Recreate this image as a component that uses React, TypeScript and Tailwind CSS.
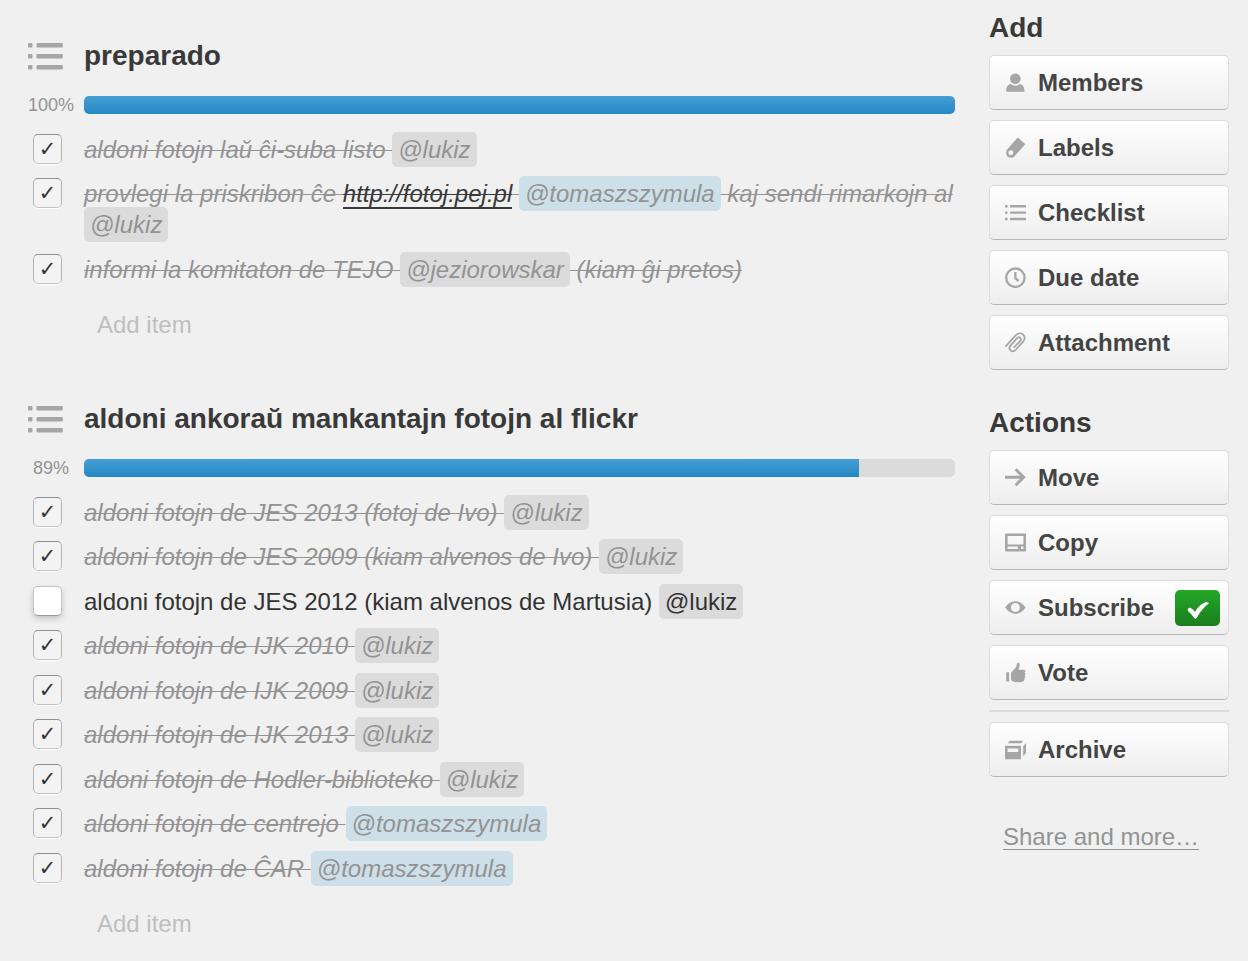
import React, { Fragment, useState } from "react";

type Part =
  | string
  | { mention: string; self?: boolean }
  | { href: string; text: string };

type Item = { id: string; done: boolean; parts: Part[] };

type List = { title: string; percent: number; items: Item[] };

const lukiz: Part = { mention: "@lukiz" };
const tomasz: Part = { mention: "@tomaszszymula", self: true };

const lists: List[] = [
  {
    title: "preparado",
    percent: 100,
    items: [
      { id: "p1", done: true, parts: ["aldoni fotojn laŭ ĉi-suba listo ", lukiz] },
      {
        id: "p2",
        done: true,
        parts: [
          "provlegi la priskribon ĉe ",
          { href: "http://fotoj.pej.pl", text: "http://fotoj.pej.pl" },
          " ",
          tomasz,
          " kaj sendi rimarkojn al ",
          lukiz,
        ],
      },
      {
        id: "p3",
        done: true,
        parts: ["informi la komitaton de TEJO ", { mention: "@jeziorowskar" }, " (kiam ĝi pretos)"],
      },
    ],
  },
  {
    title: "aldoni ankoraŭ mankantajn fotojn al flickr",
    percent: 89,
    items: [
      { id: "f1", done: true, parts: ["aldoni fotojn de JES 2013 (fotoj de Ivo) ", lukiz] },
      { id: "f2", done: true, parts: ["aldoni fotojn de JES 2009 (kiam alvenos de Ivo) ", lukiz] },
      { id: "f3", done: false, parts: ["aldoni fotojn de JES 2012 (kiam alvenos de Martusia) ", lukiz] },
      { id: "f4", done: true, parts: ["aldoni fotojn de IJK 2010 ", lukiz] },
      { id: "f5", done: true, parts: ["aldoni fotojn de IJK 2009 ", lukiz] },
      { id: "f6", done: true, parts: ["aldoni fotojn de IJK 2013 ", lukiz] },
      { id: "f7", done: true, parts: ["aldoni fotojn de Hodler-biblioteko ", lukiz] },
      { id: "f8", done: true, parts: ["aldoni fotojn de centrejo ", tomasz] },
      { id: "f9", done: true, parts: ["aldoni fotojn de ĈAR ", tomasz] },
    ],
  },
];

function Icon({ children }: { children: React.ReactNode }) {
  return (
    <svg
      viewBox="0 0 21 21"
      className="size-[21px] shrink-0 text-[#a6a6a6]"
      fill="currentColor"
      aria-hidden="true"
    >
      {children}
    </svg>
  );
}

const MembersIcon = () => (
  <Icon>
    <circle cx="10.3" cy="6.7" r="5.3" />
    <path d="M1.2 19.8v-1.6c0-3 2-5.6 4.6-6.1 1.2 1.1 2.8 1.7 4.5 1.7s3.3-.6 4.500-1.7c2.600.5 4.600 3.100 4.600 6.100v1.600z" />
  </Icon>
);

const LabelsIcon = () => (
  <Icon>
    <path
      fillRule="evenodd"
      d="M12.8.6 20.4 7.2 9.300 19.400c-1.300 1.300-4.300 1.700-6.200.6C1.100 18.800.5 15.300 1.900 12.800zM5.800 13.200a2.500 2.500 0 1 0 .01 5 2.500 2.500 0 0 0-.01-5z"
    />
  </Icon>
);

const ChecklistIcon = () => (
  <Icon>
    {[3, 9.4, 15.8].map((y) => (
      <Fragment key={y}>
        <rect x="0" y={y} width="2.6" height="2.4" rx=".5" />
        <rect x="5" y={y} width="16" height="2.4" rx=".5" />
      </Fragment>
    ))}
  </Icon>
);

const ClockIcon = () => (
  <Icon>
    <g fill="none" stroke="currentColor" strokeWidth="2.3">
      <circle cx="10.4" cy="10.7" r="9.2" />
      <path d="M10.4 5v6.300l3.300 2.700" />
    </g>
  </Icon>
);

const AttachmentIcon = () => (
  <Icon>
    <path
      d="M.9 14.2 10.9 3.100C13 .8 16 .8 18 2.500s2.200 4.600.3 6.800L10.600 18c-1.300 1.500-3.600 1.700-5 .4-1.500-1.300-1.400-3.300-.1-4.800l6.600-7.400c.9-1 2.300-1 3.100-.3.900.8.9 2 .1 2.900L9.200 15.200"
      fill="none"
      stroke="currentColor"
      strokeWidth="1.8"
      strokeLinecap="round"
    />
  </Icon>
);

const MoveIcon = () => (
  <Icon>
    <path d="M0 10.300h18M10.600 2.300l8 8-8 8" fill="none" stroke="currentColor" strokeWidth="3" />
  </Icon>
);

const CopyIcon = () => (
  <Icon>
    <path
      fillRule="evenodd"
      d="M1 1.500h19a1 1 0 0 1 1 1v16a1 1 0 0 1-1 1H1a1 1 0 0 1-1-1v-16a1 1 0 0 1 1-1zM2.600 4v8.400h15.800V4zM2.600 14.500v2.600h10.200v-2.600zM16 14.500v2.600h2.400v-2.600z"
    />
  </Icon>
);

const EyeIcon = () => (
  <Icon>
    <path
      fillRule="evenodd"
      d="M.2 10.500C2.900 6.500 6.400 4.300 10.400 4.300s7.500 2.200 10.200 6.200c-2.700 4-6.200 6.200-10.200 6.200S2.900 14.500.2 10.500zM10.400 6a4.500 4.500 0 1 0 .01 9 4.500 4.500 0 0 0-.01-9z"
    />
  </Icon>
);

const VoteIcon = () => (
  <Icon>
    <path d="M1.200 10.200h2.900v9.400H1.200zM6 12.200c0-1.200.4-2 1.300-2.900l3.500-3.800c.9-1.200.9-2.400 1.200-4.200.3-.9 2.200-.7 2.500.5.4 1.600 0 3.800-1 5.900h5.200c1.900 0 2.300 2.400.8 3 1.200.6 1.200 2.400.1 3 .9.800.8 2.400-.4 2.900.6 1 .1 2.300-1.100 2.600-1.600 1.300-5.500 1.200-7.800.8-2.200-.3-4.300-1.200-4.300-3z" />
  </Icon>
);

const ArchiveIcon = () => (
  <Icon>
    <path
      fillRule="evenodd"
      d="M0 6.800h16v13.400H0zM2.600 9.400v3.600h10.700V9.400zM2.700 4.200 5 1.700h13.200l-2 2.500zM18.200 7.200l2.800-3.200v10l-2.800 3.200z"
    />
  </Icon>
);

function ListIcon() {
  return (
    <svg viewBox="0 0 35 27" className="h-[27px] w-[35px]" fill="#a6a6a6" aria-hidden="true">
      {[0, 11, 22].map((y) => (
        <Fragment key={y}>
          <rect x="0" y={y} width="4.5" height="4.5" rx="1" />
          <rect x="8.5" y={y} width="26.300" height="4.5" rx="1" />
        </Fragment>
      ))}
    </svg>
  );
}

function ItemPart({ part }: { part: Part }) {
  if (typeof part === "string") return <>{part}</>;
  if ("mention" in part) {
    return (
      <span
        className={
          "-my-1 inline-block rounded-[5px] px-1.5 py-1 leading-[27px] " +
          (part.self ? "bg-[#cddfe8]" : "bg-[#dbdbdb]")
        }
      >
        {part.mention}
      </span>
    );
  }
  return (
    <a href={part.href} className="border-b-2 border-[#393939] text-[#393939]">
      {part.text}
    </a>
  );
}

function ChecklistItem({ item }: { item: Item }) {
  const [done, setDone] = useState(item.done);
  return (
    <li className="flex odd:pb-[13px] even:pb-[14px]">
      <div className="w-14 shrink-0 pl-[5px]">
        <input
          id={item.id}
          type="checkbox"
          checked={done}
          onChange={() => setDone(!done)}
          className="flex h-[30px] w-[29px] appearance-none items-center justify-center rounded-[5px] border border-[#c4c4c4] border-b-[#999] bg-white font-['DejaVu_Sans',sans-serif] text-[21px] leading-[28px] text-[#333] shadow-[0_3px_6px_rgba(0,0,0,0.18)] checked:border-[#b4b4b4] checked:border-t-[#8f8f8f] checked:border-b-[#c4c4c4] checked:bg-[#f3f3f3] checked:shadow-[0_1px_0_#fff] checked:before:content-['✓']"
        />
      </div>
      <label
        htmlFor={item.id}
        className={
          "min-w-0 flex-1 " +
          (done ? "text-[#939393] italic line-through decoration-1" : "text-[#333]")
        }
      >
        {item.parts.map((part, i) => (
          <ItemPart key={i} part={part} />
        ))}
      </label>
    </li>
  );
}

function Checklist({ list }: { list: List }) {
  return (
    <section>
      <div className="flex items-center">
        <div className="w-14 shrink-0">
          <ListIcon />
        </div>
        <h2 className="text-[28px] leading-9 font-bold text-[#393939]">{list.title}</h2>
      </div>
      <div className="mt-[22px] flex items-center">
        <span className="w-[46px] shrink-0 text-center text-[18px] leading-[18px] text-[#939393]">
          {list.percent}%
        </span>
        <div
          role="progressbar"
          aria-label={list.title}
          aria-valuenow={list.percent}
          className="ml-[10px] h-[18px] flex-1 overflow-hidden rounded-[5px] bg-[#dbdbdb]"
        >
          <div
            className="h-full bg-linear-to-b from-[#459fd3] to-[#2388c5]"
            style={{ width: `${list.percent}%` }}
          />
        </div>
      </div>
      <ul className="mt-5">
        {list.items.map((item) => (
          <ChecklistItem key={item.id} item={item} />
        ))}
      </ul>
      <button type="button" className="mt-[11px] ml-[69px] block text-[#bfbfbf]">
        Add item
      </button>
    </section>
  );
}

function SideButton({
  icon,
  label,
  on,
}: {
  icon: React.ReactNode;
  label: string;
  on?: boolean;
}) {
  return (
    <button
      type="button"
      className="flex h-[55px] w-full items-center gap-3 rounded-[5px] border border-[#dbdbdb] border-b-[#b7b7b7] bg-linear-to-b from-white to-[#eee] pr-2 pl-[15px] font-bold text-[#444]"
    >
      {icon}
      <span>{label}</span>
      {on && (
        <span className="ml-auto flex h-9 w-[45px] items-center justify-center rounded-[5px] bg-linear-to-b from-[#24a828] to-[#1b7e1e]">
          <svg viewBox="0 0 22 22" className="size-[22px]" fill="#fff" aria-hidden="true">
            <path d="M.9 14c-.9-1.300.9-4 2.800-3 1.800.9 3.200 2.500 4.200 3.900 2.300-4.100 5.400-7.600 9.500-9.200 1.800-.7 4.700-.3 4.300.8-4.600 3.300-8.300 7.700-11.900 14.300-.7 1.200-1.700 1.200-2.500.2C5.500 18.600 3.200 15.800.9 14z" />
          </svg>
        </span>
      )}
    </button>
  );
}

export default function App() {
  return (
    <div className="flex min-h-screen items-start gap-[34px] bg-[#f0f0f0] pr-[19px] pl-7 font-['Liberation_Sans',Arial,sans-serif] text-[24px] leading-[31px]">
      <main className="flex min-w-0 flex-1 flex-col gap-[61px] pt-[38px] pb-5">
        {lists.map((list) => (
          <Checklist key={list.title} list={list} />
        ))}
      </main>

      <aside className="w-60 shrink-0 pt-[10px]">
        <h3 className="text-[28px] leading-9 font-bold text-[#393939]">Add</h3>
        <div className="mt-[9px] flex flex-col gap-[10px]">
          <SideButton icon={<MembersIcon />} label="Members" />
          <SideButton icon={<LabelsIcon />} label="Labels" />
          <SideButton icon={<ChecklistIcon />} label="Checklist" />
          <SideButton icon={<ClockIcon />} label="Due date" />
          <SideButton icon={<AttachmentIcon />} label="Attachment" />
        </div>

        <h3 className="mt-[35px] text-[28px] leading-9 font-bold text-[#393939]">Actions</h3>
        <div className="mt-[9px] flex flex-col gap-[10px]">
          <SideButton icon={<MoveIcon />} label="Move" />
          <SideButton icon={<CopyIcon />} label="Copy" />
          <SideButton icon={<EyeIcon />} label="Subscribe" on />
          <SideButton icon={<VoteIcon />} label="Vote" />
          <hr className="border-t-2 border-[#dbdbdb]" />
          <SideButton icon={<ArchiveIcon />} label="Archive" />
        </div>

        <a
          href="#more"
          className="mt-11 ml-[14px] inline-block text-[#939393] underline decoration-1 underline-offset-4"
        >
          Share and more…
        </a>
      </aside>
    </div>
  );
}
